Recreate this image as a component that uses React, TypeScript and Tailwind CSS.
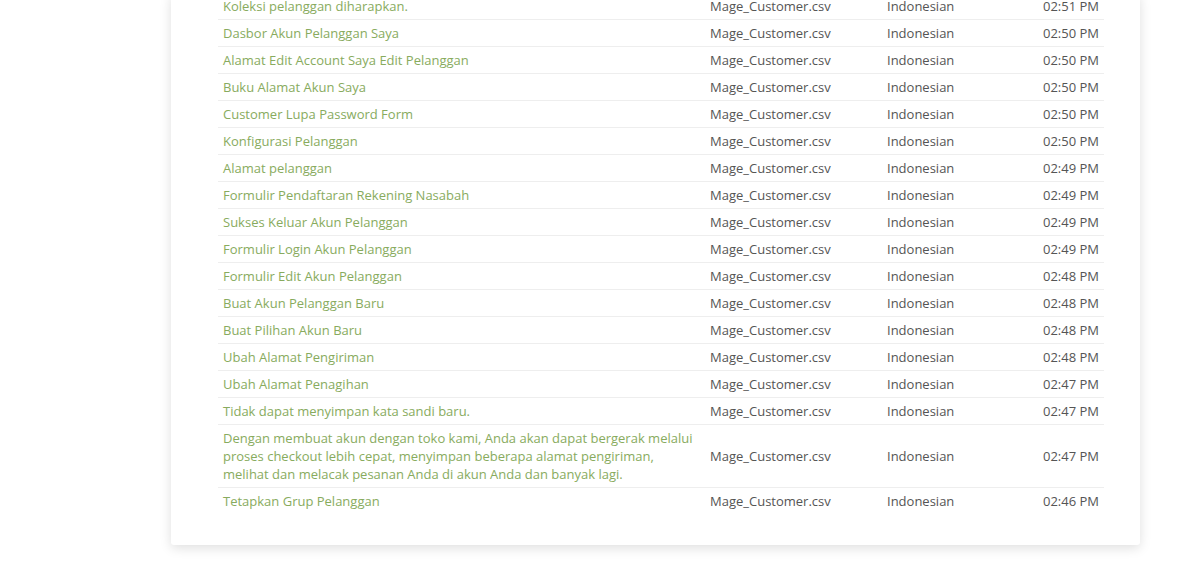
import React from "react";

const rows: { t: string; time: string }[] = [
  { t: "Koleksi pelanggan diharapkan.", time: "02:51 PM" },
  { t: "Dasbor Akun Pelanggan Saya", time: "02:50 PM" },
  { t: "Alamat Edit Account Saya Edit Pelanggan", time: "02:50 PM" },
  { t: "Buku Alamat Akun Saya", time: "02:50 PM" },
  { t: "Customer Lupa Password Form", time: "02:50 PM" },
  { t: "Konfigurasi Pelanggan", time: "02:50 PM" },
  { t: "Alamat pelanggan", time: "02:49 PM" },
  { t: "Formulir Pendaftaran Rekening Nasabah", time: "02:49 PM" },
  { t: "Sukses Keluar Akun Pelanggan", time: "02:49 PM" },
  { t: "Formulir Login Akun Pelanggan", time: "02:49 PM" },
  { t: "Formulir Edit Akun Pelanggan", time: "02:48 PM" },
  { t: "Buat Akun Pelanggan Baru", time: "02:48 PM" },
  { t: "Buat Pilihan Akun Baru", time: "02:48 PM" },
  { t: "Ubah Alamat Pengiriman", time: "02:48 PM" },
  { t: "Ubah Alamat Penagihan", time: "02:47 PM" },
  { t: "Tidak dapat menyimpan kata sandi baru.", time: "02:47 PM" },
  {
    t: "Dengan membuat akun dengan toko kami, Anda akan dapat bergerak melalui proses checkout lebih cepat, menyimpan beberapa alamat pengiriman, melihat dan melacak pesanan Anda di akun Anda dan banyak lagi.",
    time: "02:47 PM",
  },
  { t: "Tetapkan Grup Pelanggan", time: "02:46 PM" },
];

export default function App() {
  return (
    <div
      className="w-[1183px] h-[570px] overflow-hidden bg-white"
      style={{ fontFamily: '"Open Sans", sans-serif' }}
    >
      <div className="ml-[171px] w-[969px] mt-[-7px] bg-white rounded-[3px] shadow-[0_3px_12px_rgba(0,0,0,0.13)] pl-[47px] pr-[36px] pb-[31px]">
        <div className="flex flex-col text-[13px] leading-[18px]">
          {rows.map((r, i) => (
            <div
              key={i}
              className={`flex items-center ${i > 0 ? "border-t border-[#eeeeee]" : ""}`}
            >
              <div className="w-[487px] px-[5px] py-[4px] text-[#88ab5e] pr-[10px]">
                {r.t}
              </div>
              <div className="w-[177px] px-[5px] py-[4px] text-[#555555]">
                Mage_Customer.csv
              </div>
              <div className="w-[120px] px-[5px] py-[4px] text-[#555555]">
                Indonesian
              </div>
              <div className="flex-1 px-[5px] py-[4px] text-right text-[#555555]">
                {r.time}
              </div>
            </div>
          ))}
        </div>
      </div>
    </div>
  );
}
